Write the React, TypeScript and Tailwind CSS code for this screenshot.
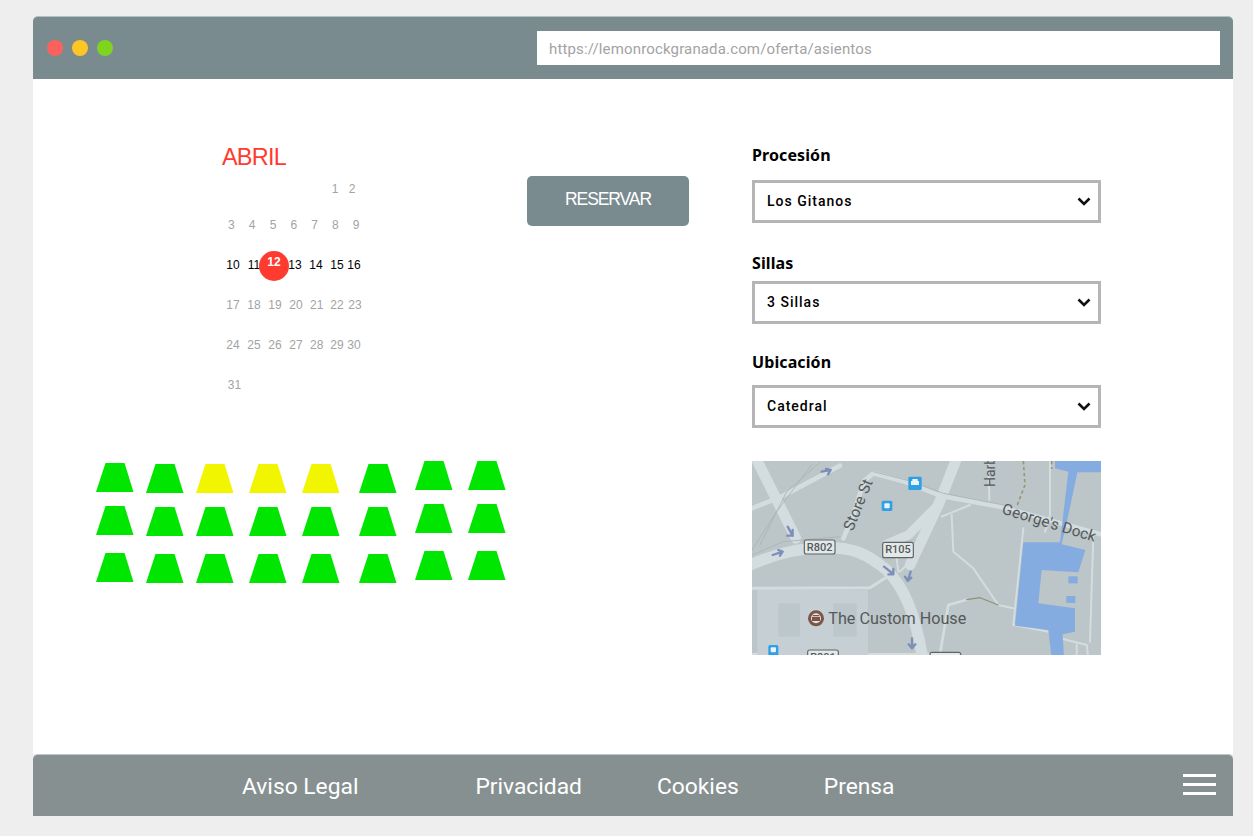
import React from "react";

const font = "font-['Roboto',sans-serif]";

function Seat({ yellow = false }: { yellow?: boolean }) {
  return (
    <svg width="38" height="29" viewBox="0 0 38 29" className="block">
      <polygon points="9.5,0 28.5,0 37.5,29 0,29" fill={yellow ? "#f2f500" : "#00e600"} />
    </svg>
  );
}

const cols: { cls: string; yellow?: boolean; w: string }[] = [
  { cls: "mt-0", w: "mr-[12px]" },
  { cls: "mt-[1px]", w: "mr-[12px]" },
  { cls: "mt-[1px]", w: "mr-[15px]", yellow: true },
  { cls: "mt-[1px]", w: "mr-[15px]", yellow: true },
  { cls: "mt-[1px]", w: "mr-[19px]", yellow: true },
  { cls: "mt-[1px]", w: "mr-[18px]" },
  { cls: "-mt-[2px]", w: "mr-[15px]" },
  { cls: "-mt-[2px]", w: "" },
];

function Seats() {
  return (
    <div className="flex pl-[63px] mt-[68px]">
      {cols.map((c, i) => (
        <div key={i} className={`flex flex-col ${c.cls} ${c.w}`}>
          <Seat yellow={c.yellow} />
          <div className="mt-[13.5px]">
            <Seat />
          </div>
          <div className="mt-[18.5px]">
            <Seat />
          </div>
        </div>
      ))}
    </div>
  );
}

function Cell({ n }: { n: string }) {
  return <span className="flex justify-center whitespace-nowrap">{n}</span>;
}

function Calendar() {
  return (
    <div className="ml-[189px] w-[160px] font-['Liberation_Sans',sans-serif] text-[12px] leading-5 text-[#a3a3a3]">
      <div className="h-[32px] mt-[62px] text-[23.5px] tracking-[-0.8px] leading-[32px] text-[#ff3b30]">ABRIL</div>
      <div className="mt-[6px] ml-[104.5px] grid grid-cols-[17px_17px]">
        <Cell n="1" />
        <Cell n="2" />
      </div>
      <div className="mt-[16px] -ml-[1px] grid grid-cols-[repeat(7,20.8px)]">
        {["3", "4", "5", "6", "7", "8", "9"].map((n) => (
          <Cell key={n} n={n} />
        ))}
      </div>
      <div className="relative mt-[20px] ml-[0.5px] grid grid-cols-[21px_21px_20px_21px_21px_21px_13px] text-black">
        {["10", "11", "", "13", "14", "15", "16"].map((n, i) => (
          <Cell key={i} n={n} />
        ))}
        <div className="absolute left-[36.5px] -top-[4px] w-[30px] h-[30px] rounded-full bg-[#ff3b30] text-white font-bold text-[12px] flex justify-center pt-[1px] leading-[20px]">
          12
        </div>
      </div>
      <div className="mt-[20px] ml-[0.5px] grid grid-cols-[21px_21px_21px_21px_20.5px_20px_16px]">
        {["17", "18", "19", "20", "21", "22", "23"].map((n) => (
          <Cell key={n} n={n} />
        ))}
      </div>
      <div className="mt-[20px] ml-[0.5px] grid grid-cols-[21px_21px_21px_21px_20.5px_20px_14px]">
        {["24", "25", "26", "27", "28", "29", "30"].map((n) => (
          <Cell key={n} n={n} />
        ))}
      </div>
      <div className="mt-[20px] ml-[2px] grid grid-cols-[21px]">
        <Cell n="31" />
      </div>
    </div>
  );
}

function Chevron() {
  return (
    <svg width="14" height="9" viewBox="0 0 14 9" fill="none">
      <path d="M1.5 1.500 7 7l5.500-5.500" stroke="#111" strokeWidth="2.6" />
    </svg>
  );
}

function Select({ value }: { value: string }) {
  return (
    <div className="h-[43px] w-[349px] border-[3px] border-[#b5b5b5] bg-white flex items-center justify-between pl-[12px] pr-[7px]">
      <span className={`${font} text-[14px] font-medium tracking-[1px] text-black`}>{value}</span>
      <Chevron />
    </div>
  );
}

function MapPic() {
  const road = "#d3dcdf";
  const arrow = "#7d8fb8";
  const txt = "#54595a";
  return (
    <svg width="349" height="194" viewBox="36 18 1047 582" className="block">
      <rect x="36" y="18" width="1047" height="582" fill="#bcc5c7" />
      <g className="blur-[0.6px]" fill="none" strokeLinejoin="round" strokeLinecap="round">
        <path d="M30 10H1090V610H30Z" fill="#bcc5c7" stroke="none" />
        <path d="M52 18 168 250" stroke={road} strokeWidth="32" />
        <path d="M36 160 130 122 300 32" stroke={road} strokeWidth="14" />
        <path d="M30 330 C120 290 190 278 260 278 C340 278 380 295 440 345 C490 395 525 470 548 610" stroke={road} strokeWidth="34" />
        <path d="M650 10 595 150 510 330" stroke={road} strokeWidth="32" />
        <path d="M595 150 505 240 440 268" stroke={road} strokeWidth="28" />
        <path d="M310 250 340 180 372 78 400 55 500 82 600 122 780 155 1090 240" stroke={road} strokeWidth="14" />
        <path d="M36 300 130 260 300 245 M36 285 110 170 215 30 M60 270 140 110 240 22 M400 50 510 78 610 115 790 150" stroke="#a9b2b4" strokeWidth="2.500" />
        <path d="M635 180 640 290 700 340 775 450 820 460" stroke={road} strokeWidth="6" />
        <path d="M820 510 850 220 M930 18 930 180 915 230 M1060 240 1050 560 M745 18 748 135 M605 185 690 150" stroke={road} strokeWidth="6" />
        <path d="M36 400 390 398 450 360" stroke={road} strokeWidth="9" />
        <path d="M36 598 600 598 625 450 680 434" stroke={road} strokeWidth="8" />
        <path d="M470 310 475 350 M500 330 480 350" stroke={road} strokeWidth="6" />
        <path d="M680 434 720 428 775 450" stroke="#8f9278" strokeWidth="3.500" />
        <path d="M850 18 855 90 830 155" stroke="#9a9878" strokeWidth="5" strokeDasharray="10 8" strokeLinecap="butt" />
        <path d="M935 18 935 42" stroke="#9a9878" strokeWidth="5" strokeDasharray="10 8" strokeLinecap="butt" />
        <path d="M820 510 925 530 970 552 1040 570 1045 610 M1010 610 1010 570" stroke={road} strokeWidth="6" />
        <rect x="52" y="405" width="332" height="200" fill="#c6d0d4" stroke="none" />
        <path d="M115 445H180V545H115Z M280 445H350V545H280Z" fill="#bcc7cb" stroke="none" />
        <path d="M945 10H1090V52H1012L985 180 965 268 1036 285 1015 352 905 345 895 445 1005 460 1005 530 968 538 972 610H935L925 525 825 512 850 262H960L985 50 945 40Z" fill="#85ace0" stroke="none" />
        <rect x="985" y="364" width="28" height="21" fill="#85ace0" stroke="none" />
        <rect x="979" y="423" width="27" height="21" fill="#85ace0" stroke="none" />
        <rect x="505" y="65" width="40" height="40" rx="4" fill="#2f9fe6" stroke="none" />
        <path d="M513 78H537V90H513Z M517 72H533V78H517Z" fill="#e8f3fa" stroke="none" />
        <rect x="425" y="137" width="32" height="31" rx="5" fill="#2f9fe6" stroke="none" />
        <rect x="433" y="145" width="16" height="15" rx="3" fill="#e8f3fa" stroke="none" />
        <rect x="85" y="570" width="30" height="34" rx="5" fill="#2f9fe6" stroke="none" />
        <rect x="92" y="577" width="16" height="15" rx="3" fill="#e8f3fa" stroke="none" />
        <path d="M143 215 158 242M158 225V242H142 M98 300 128 290M115 285 128 290 120 302 M432 335 460 357M445 358H460V342 M512 350 503 378M495 365 503 378 514 368 M516 550V578M506 568 516 580 526 568 M245 50 272 45M258 42 272 45 264 58" stroke={arrow} strokeWidth="7" />
        <circle cx="228" cy="490" r="24" fill="#7a5548" stroke="none" />
        <circle cx="228" cy="490" r="15" fill="#e3e3e0" stroke="none" />
        <path d="M216 486H240V498H216Z M218 480H238V484H218Z" fill="#7a5548" stroke="none" />
      </g>
      <g fontFamily="Roboto, sans-serif" fill={txt}>
        <text x="265" y="507" fontSize="48.500">The Custom House</text>
        <text transform="translate(338 230) rotate(-68)" fontSize="46">Store St</text>
        <text transform="translate(765 96) rotate(-90)" fontSize="42">Harb</text>
        <text transform="translate(783 175) rotate(17)" fontSize="46">George's Dock</text>
        {[
          ["R802", 193, 255, 92, 42],
          ["R105", 428, 262, 92, 46],
          ["R801", 203, 585, 92, 42],
          ["", 570, 592, 92, 42],
        ].map(([l, x, y, w, h]) => (
          <g key={String(x)}>
            <rect x={Number(x)} y={Number(y)} width={Number(w)} height={Number(h)} rx="6" fill="#e3e8e9" stroke="#5f6566" strokeWidth="3.500" />
            <text x={Number(x) + 46} y={Number(y) + 33} fontSize="33" textAnchor="middle" fontWeight="500">{l}</text>
          </g>
        ))}
      </g>
    </svg>
  );
}

function Label({ children, cls }: { children: React.ReactNode; cls: string }) {
  return (
    <div className={`h-[24px] leading-[24px] text-[16px] font-bold text-black font-['Noto_Sans',sans-serif] tracking-[0.1px] ${cls}`}>
      {children}
    </div>
  );
}

export default function App() {
  return (
    <div className="h-[836px] bg-[#eeeeee] px-[33px] pt-[16px] overflow-hidden">
      <div className="w-[1200px] flex flex-col">
        <header className="h-[63px] bg-[#7a8b90] rounded-t-[5px] border-t border-[#b4bfc1] flex items-center justify-between pl-[14px] pr-[13px]">
          <div className="flex gap-[9px]">
            <span className="w-4 h-4 rounded-full bg-[#fc615d]" />
            <span className="w-4 h-4 rounded-full bg-[#fdc624]" />
            <span className="w-4 h-4 rounded-full bg-[#7ed41f]" />
          </div>
          <div className={`w-[683px] h-[34px] bg-white pl-[12px] pt-[2px] flex items-center text-[15px] tracking-[0.15px] text-[#a3a3a3] ${font}`}>
            https://lemonrockgranada.com/oferta/asientos
          </div>
        </header>

        <main className="h-[675px] bg-white flex">
          <div className="w-[494px] shrink-0">
            <Calendar />
            <Seats />
          </div>
          <div className="w-[225px] shrink-0 pt-[97px]">
            <button className="w-[162px] h-[50px] pb-[3px] rounded-[5px] bg-[#7a8b90] text-white text-[17.5px] tracking-[-1.1px] font-['Liberation_Sans',sans-serif]">
              RESERVAR
            </button>
          </div>
          <div className="flex flex-col">
            <Label cls="mt-[64px] mb-[13px]">Procesión</Label>
            <Select value="Los Gitanos" />
            <Label cls="mt-[28px] mb-[6px]">Sillas</Label>
            <Select value="3 Sillas" />
            <Label cls="mt-[26px] mb-[11px]">Ubicación</Label>
            <Select value="Catedral" />
            <div className="mt-[33px]">
              <MapPic />
            </div>
          </div>
        </main>

        <footer className={`relative h-[62px] bg-[#879090] rounded-t-[5px] border-t border-[#c2c7c7] flex items-center pt-[3px] text-white text-[22.8px] ${font}`}>
          <span className="ml-[209px]">Aviso Legal</span>
          <span className="ml-[117px]">Privacidad</span>
          <span className="ml-[75px]">Cookies</span>
          <span className="ml-[85px]">Prensa</span>
          <div className="absolute right-[17px] top-[19px] w-[33px] flex flex-col gap-[6px]">
            <span className="h-[3px] bg-white" />
            <span className="h-[3px] bg-white" />
            <span className="h-[3px] bg-white" />
          </div>
        </footer>
      </div>
    </div>
  );
}
